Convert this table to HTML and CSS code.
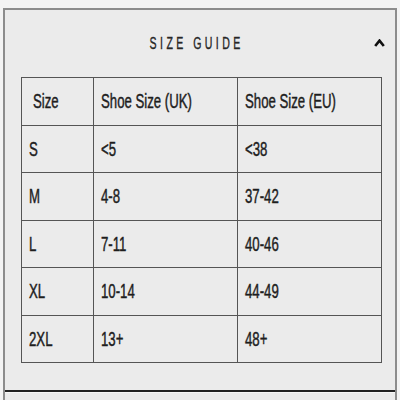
FILE: index.html
```html
<!DOCTYPE html>
<html lang="en">
<head>
<meta charset="utf-8">
<title>Size Guide</title>
<link rel="stylesheet" href="styles.css">
</head>
<body>
<section class="panel">
  <div class="acc">
    <header class="acc-head">
      <span class="spacer"></span>
      <h2 class="acc-title"><span class="title-text">SIZE GUIDE</span></h2>
      <svg class="caret" width="11" height="8" viewBox="0 0 11 8" aria-hidden="true">
        <polyline points="1.2,7 5.5,1.6 9.8,7" fill="none" stroke="#111" stroke-width="2.6" stroke-linejoin="miter"/>
      </svg>
    </header>
    <table class="size-table">
      <colgroup>
        <col class="c1"><col class="c2"><col class="c3">
      </colgroup>
      <thead>
        <tr><th class="first"><span class="sq">Size</span></th><th><span class="sq">Shoe Size (UK)</span></th><th><span class="sq">Shoe Size (EU)</span></th></tr>
      </thead>
      <tbody>
        <tr><td><span class="sq">S</span></td><td><span class="sq">&lt;5</span></td><td><span class="sq">&lt;38</span></td></tr>
        <tr><td><span class="sq">M</span></td><td><span class="sq">4-8</span></td><td><span class="sq">37-42</span></td></tr>
        <tr><td><span class="sq">L</span></td><td><span class="sq">7-11</span></td><td><span class="sq">40-46</span></td></tr>
        <tr><td><span class="sq">XL</span></td><td><span class="sq">10-14</span></td><td><span class="sq">44-49</span></td></tr>
        <tr><td><span class="sq">2XL</span></td><td><span class="sq">13+</span></td><td><span class="sq">48+</span></td></tr>
      </tbody>
    </table>
  </div>
  <div class="acc-next"></div>
</section>
</body>
</html>
```
FILE: styles.css
```css
html, body {
  margin: 0;
  height: 100%;
}
body {
  background: #f3f3f3;
  font-family: "Liberation Sans", Arial, sans-serif;
  color: #222;
  overflow: hidden;
}
.panel {
  margin: 8px 3px 0;
  height: 392px;
  box-sizing: border-box;
  border: 2px solid #8c8c8c;
  border-bottom: 0;
  background: #ebebeb;
  display: flex;
  flex-direction: column;
}
.acc {
  border-bottom: 2px solid #222;
  padding: 0 14px 27px 16px;
}
.acc-head {
  height: 67px;
  margin: 0 -14px 0 -16px;
  padding-right: 10px;
  display: grid;
  grid-template-columns: 1fr auto 1fr;
  align-items: center;
}
.acc-title {
  margin: 0;
  font-size: 16px;
  font-weight: 400;
  color: #262626;
  line-height: 1;
}
.title-text {
  display: inline-block;
  letter-spacing: 5.2px;
  padding-left: 5.2px;
  transform: scaleX(0.66);
  transform-origin: center;
  -webkit-text-stroke: 0.35px #262626;
}
.caret {
  justify-self: end;
  display: block;
  margin-top: -2px;
}
.size-table {
  border-collapse: collapse;
  width: 360px;
  table-layout: fixed;
  font-size: 20px;
  color: #1e1e1e;
}
.c1 { width: 72px; }
.c2 { width: 144px; }
.c3 { width: 144px; }
.size-table th,
.size-table td {
  border: 1px solid #555;
  height: 47.5px;
  padding: 0 0 0 7px;
  text-align: left;
  font-weight: 400;
  vertical-align: middle;
  white-space: nowrap;
  line-height: 1;
  box-sizing: border-box;
}
.size-table th.first {
  padding-left: 11px;
}
.sq {
  display: inline-block;
  transform: scaleX(0.66);
  transform-origin: left center;
  -webkit-text-stroke: 0.45px #1e1e1e;
}
.acc-next {
  flex: 1;
  border-top: 1px solid #f7f7f7;
}
```
